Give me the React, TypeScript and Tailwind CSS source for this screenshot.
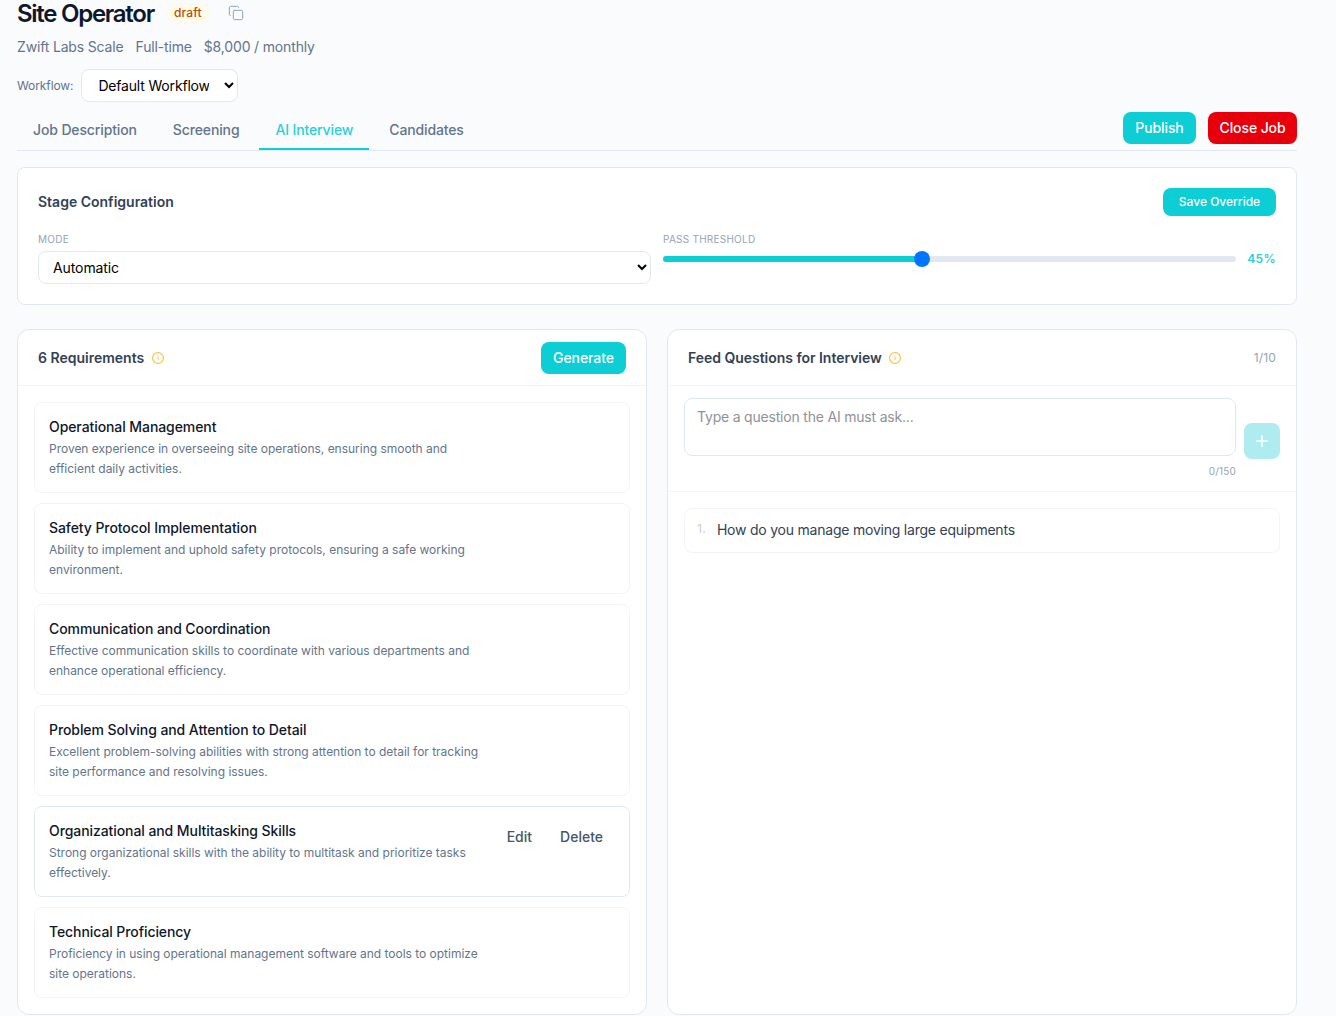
import React, { useState } from 'react';
import { Copy, Plus } from 'lucide-react';

const tabs = ['Job Description', 'Screening', 'AI Interview', 'Candidates'];

const requirements = [
  {
    title: 'Operational Management',
    text: 'Proven experience in overseeing site operations, ensuring smooth and efficient daily activities.',
  },
  {
    title: 'Safety Protocol Implementation',
    text: 'Ability to implement and uphold safety protocols, ensuring a safe working environment.',
  },
  {
    title: 'Communication and Coordination',
    text: 'Effective communication skills to coordinate with various departments and enhance operational efficiency.',
  },
  {
    title: 'Problem Solving and Attention to Detail',
    text: 'Excellent problem-solving abilities with strong attention to detail for tracking site performance and resolving issues.',
  },
  {
    title: 'Organizational and Multitasking Skills',
    text: 'Strong organizational skills with the ability to multitask and prioritize tasks effectively.',
  },
  {
    title: 'Technical Proficiency',
    text: 'Proficiency in using operational management software and tools to optimize site operations.',
  },
];

const InfoIcon: React.FC = () => (
  <svg className="w-3 h-3" viewBox="0 0 12 12" fill="none" stroke="#fcc240">
    <circle cx="6" cy="6" r="5.4" strokeWidth="1.2" />
    <path d="M5.4 5.2h.8v3" strokeWidth="0.9" />
    <path d="M5.8 3.3v.9" strokeWidth="0.9" />
  </svg>
);

const App: React.FC = () => {
  const [activeTab, setActiveTab] = useState('AI Interview');
  const [selected, setSelected] = useState(4);
  const [threshold, setThreshold] = useState(45);
  const [question, setQuestion] = useState('');

  return (
    <div className="h-[1016px] overflow-hidden bg-[#f9fbfd] pl-[17px] pr-[39px] text-sm text-[#64748b] font-['Inter',sans-serif]">
      {/* Job title */}
      <div className="flex h-7 items-center">
        <h1 className="text-2xl leading-7 font-semibold tracking-[-1.27px] text-[#0f172a]">Site Operator</h1>
        <span className="ml-3 mb-0.5 rounded-full bg-[#fffbeb] px-2 py-0.5 text-xs font-medium tracking-[0.15px] text-[#bb4d00]">
          draft
        </span>
        <button className="ml-[18px] mb-0.5 text-[#94a3b8]">
          <Copy size={16} strokeWidth={1.5} />
        </button>
      </div>

      <div className="mt-[9px] flex h-5 items-center gap-3 tracking-[-0.16px]">
        <span>Zwift Labs Scale</span>
        <span>Full-time</span>
        <span>$8,000 / monthly</span>
      </div>

      <div className="mt-3 flex items-center gap-2">
        <label className="text-xs tracking-[-0.1px]">Workflow:</label>
        <select className="h-[33px] w-[157px] rounded-lg border border-[#e2e8f0] bg-white px-3 text-sm tracking-[-0.18px] text-black">
          <option>Default Workflow</option>
        </select>
      </div>

      {/* Tabs and actions */}
      <div className="mt-2 flex h-[41px] items-start justify-between border-b border-[#e2e8f0]">
        <nav className="flex gap-1">
          {tabs.map((tab) => (
            <button
              key={tab}
              onClick={() => setActiveTab(tab)}
              className={`h-10 border-b-2 px-4 pt-0.5 font-medium tracking-[-0.13px] ${
                activeTab === tab ? 'border-[#0dcdd5] text-[#2bd0d5]' : 'border-transparent text-[#64748b]'
              }`}
            >
              {tab}
            </button>
          ))}
        </nav>
        <div className="mt-0.5 flex gap-3 font-medium tracking-[-0.1px] text-white">
          <button className="h-8 w-[73px] rounded-lg bg-[#0dcdd5]">Publish</button>
          <button className="h-8 w-[89px] rounded-lg bg-[#e7000b]">Close Job</button>
        </div>
      </div>

      {/* Stage configuration */}
      <section className="mt-4 h-[138px] rounded-lg border border-[#e2e8f0] bg-white p-5">
        <div className="flex h-7 items-center justify-between">
          <h2 className="font-semibold text-[#334155]">Stage Configuration</h2>
          <button className="h-7 w-[113px] rounded-lg bg-[#0dcdd5] text-xs font-medium text-white">Save Override</button>
        </div>
        <div className="mt-4 grid grid-cols-2 gap-3">
          <div>
            <label className="block text-[10px] leading-[15px] tracking-wide text-[#94a3b8]">MODE</label>
            <select className="mt-1 h-[33px] w-full rounded-lg border border-[#e2e8f0] bg-white px-2.5 text-sm tracking-[-0.1px] text-black">
              <option>Automatic</option>
            </select>
          </div>
          <div>
            <label className="block text-[10px] leading-[15px] tracking-wide text-[#94a3b8]">PASS THRESHOLD</label>
            <div className="mt-1 flex h-4 items-center">
              <div className="relative h-1.5 flex-1 rounded-full bg-[#e2e8f0]">
                <div className="h-full rounded-full bg-[#0dcdd5]" style={{ width: `${threshold}%` }} />
                <button
                  onClick={() => setThreshold(45)}
                  className="absolute -top-[5px] h-4 w-4 -translate-x-1/2 rounded-full bg-[#0075ff]"
                  style={{ left: `${threshold + 0.15}%` }}
                />
              </div>
              <span className="w-10 text-right text-xs font-semibold tracking-[0.4px] text-[#2bd0d5]">{threshold}%</span>
            </div>
          </div>
        </div>
      </section>

      <div className="mt-6 grid h-[686px] grid-cols-2 gap-5">
        {/* Requirements */}
        <section className="rounded-xl border border-[#e2e8f0] bg-white">
          <div className="flex h-14 items-center justify-between border-b border-[#f1f5f9] px-5">
            <h2 className="flex items-center gap-2 font-semibold text-[#334155]">
              6 Requirements <InfoIcon />
            </h2>
            <button className="h-8 w-[85px] rounded-lg bg-[#0dcdd5] font-medium tracking-[-0.08px] text-white">Generate</button>
          </div>
          <ul className="flex flex-col gap-2.5 p-4">
            {requirements.map((item, i) => (
              <li
                key={item.title}
                onMouseEnter={() => setSelected(i)}
                className={`flex h-[91px] items-start justify-between rounded-lg border px-3.5 py-3.5 ${
                  selected === i ? 'border-[#e2e8f0]' : 'border-[#f1f5f9]'
                }`}
              >
                <div className="w-[440px]">
                  <h3 className="font-medium tracking-[-0.08px] text-[#0f172a]">{item.title}</h3>
                  <p className="mt-0.5 text-xs leading-5 tracking-[-0.015px]">{item.text}</p>
                </div>
                {selected === i && (
                  <div className="flex h-8 items-center gap-7 pr-3 font-medium text-[#475569]">
                    <button>Edit</button>
                    <button>Delete</button>
                  </div>
                )}
              </li>
            ))}
          </ul>
        </section>

        {/* Interview questions */}
        <section className="rounded-xl border border-[#e2e8f0] bg-white">
          <div className="flex h-14 items-center justify-between border-b border-[#f1f5f9] px-5">
            <h2 className="flex items-center gap-[7px] font-semibold tracking-[-0.03px] text-[#334155]">
              Feed Questions for Interview <InfoIcon />
            </h2>
            <span className="text-xs tracking-[0.15px] text-[#94a3b8]">1/10</span>
          </div>
          <div className="flex h-[106px] gap-2 border-b border-[#f1f5f9] px-4 pt-3">
            <div className="flex-1">
              <textarea
                value={question}
                onChange={(e) => setQuestion(e.target.value)}
                placeholder="Type a question the AI must ask..."
                className="block h-[58px] w-full resize-none rounded-lg border border-[#e2e8f0] px-3 py-2 text-sm tracking-[-0.2px] placeholder:text-[#8f9297]"
              />
              <p className="mt-2 text-right text-[10px] leading-[15px] tracking-[0.15px] text-[#94a3b8]">{question.length}/150</p>
            </div>
            <button className="mt-[25px] flex h-9 w-9 items-center justify-center rounded-lg bg-[#aeecef] text-white">
              <Plus size={18} strokeWidth={2} />
            </button>
          </div>
          <div className="p-4">
            <div className="flex h-[45px] items-center gap-[11px] rounded-lg border border-[#f1f5f9] px-3">
              <span className="mb-[3px] text-xs font-medium tracking-[0.15px] text-[#cbd5e1]">1.</span>
              <span className="mb-0.5 tracking-[-0.22px] text-[#334155]">How do you manage moving large equipments</span>
            </div>
          </div>
        </section>
      </div>
    </div>
  );
};

export default App;
